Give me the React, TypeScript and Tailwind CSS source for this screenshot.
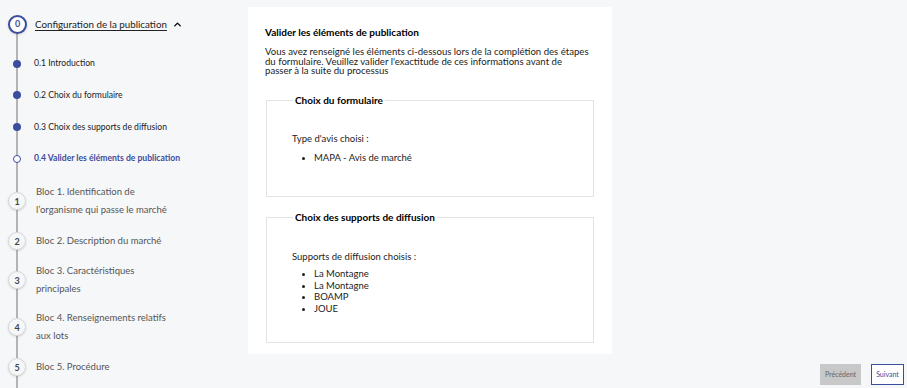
import { ChevronUp } from "lucide-react";

const subSteps = [
  { label: "0.1 Introduction", done: true },
  { label: "0.2 Choix du formulaire", done: true },
  { label: "0.3 Choix des supports de diffusion", done: true },
  { label: "0.4 Valider les éléments de publication", done: false },
];

const blocs = [
  { n: 1, lines: ["Bloc 1. Identification de", "l’organisme qui passe le marché"], h: "h-[46px]" },
  { n: 2, lines: ["Bloc 2. Description du marché"], h: "h-[34px]" },
  { n: 3, lines: ["Bloc 3. Caractéristiques", "principales"], h: "h-[44px]" },
  { n: 4, lines: ["Bloc 4. Renseignements relatifs", "aux lots"], h: "h-[50px]" },
  { n: 5, lines: ["Bloc 5. Procédure"], h: "h-[30px]" },
];

function Fieldset({
  legend,
  intro,
  items,
  listClass,
  className,
}: {
  legend: string;
  intro: string;
  items: string[];
  listClass: string;
  className: string;
}) {
  return (
    <fieldset className={`mx-[18px] border border-[#e3e3e3] px-[25px] ${className}`}>
      <legend className="ml-[1px] px-[2px] text-[10px] font-bold text-black">{legend}</legend>
      <p className="text-[9.5px] text-[#222]">{intro}</p>
      <ul className={`ml-[22px] list-disc text-[#222] marker:text-[8px] ${listClass}`}>
        {items.map((item, i) => (
          <li key={i}>{item}</li>
        ))}
      </ul>
    </fieldset>
  );
}

export default function App() {
  return (
    <div
      className="flex h-[388px] w-[907px] overflow-hidden bg-[#f6f7f9]"
      style={{ fontFamily: "Lato, 'Open Sans', sans-serif" }}
    >
      {/* stepper */}
      <div className="relative w-[248px] shrink-0 pt-[14px]">
        <div className="absolute top-[30px] bottom-0 left-[16px] w-[2px] bg-[#b4b4b4]" />
        <div className="relative flex h-[20px] items-center">
          <div className="ml-[8px] flex h-[19px] w-[19px] items-center justify-center rounded-full border-2 border-[#3b4d9e] bg-white text-[9px] font-bold text-[#3b4d9e] shadow">
            0
          </div>
          <span className="ml-[8px] text-[9.8px] text-[#222] underline underline-offset-2">
            Configuration de la publication
          </span>
          <ChevronUp className="ml-[5px] h-[11px] w-[11px] text-black" strokeWidth={3} />
        </div>
        <div className="relative mt-[14px] flex flex-col">
          {subSteps.map((s) => (
            <div key={s.label} className="flex h-[31.6px] items-center">
              <div
                className={`ml-[13px] h-[8px] w-[8px] rounded-full ${
                  s.done ? "bg-[#3b4d9e]" : "border-[1.5px] border-[#3b4d9e] bg-white"
                }`}
              />
              <span
                className={`ml-[13px] text-[8.6px] ${
                  s.done ? "text-[#222]" : "font-bold text-[#3b4d9e]"
                }`}
              >
                {s.label}
              </span>
            </div>
          ))}
        </div>
        <div className="relative mt-[4px] flex flex-col">
          {blocs.map((b) => (
            <div key={b.n} className={`flex items-center ${b.h}`}>
              <div className="ml-[8px] flex h-[18px] w-[18px] shrink-0 items-center justify-center rounded-full border border-[#d8d8d8] bg-[#f6f7f9] text-[9px] font-bold text-[#444] shadow">
                {b.n}
              </div>
              <div className="ml-[10px] text-[9.5px] leading-[18px] text-[#555]">
                {b.lines.map((l) => (
                  <div key={l}>{l}</div>
                ))}
              </div>
            </div>
          ))}
        </div>
      </div>

      {/* main panel */}
      <div className="mt-[7px] h-[347px] w-[364px] shrink-0 bg-white pt-[18px]">
        <h1 className="px-[17px] text-[10px] font-bold text-black">
          Valider les éléments de publication
        </h1>
        <p className="mt-[7px] px-[17px] text-[9.6px] leading-[9.6px] text-[#222]">
          Vous avez renseigné les éléments ci-dessous lors de la complétion des étapes du
          formulaire. Veuillez valider l'exactitude de ces informations avant de
          <br />
          passer à la suite du processus
        </p>
        <Fieldset
          legend="Choix du formulaire"
          intro="Type d'avis choisi :"
          items={["MAPA - Avis de marché"]}
          listClass="mt-[6px] text-[9.5px] leading-[12px]"
          className="mt-[17px] h-[104px] pt-[24px]"
        />
        <Fieldset
          legend="Choix des supports de diffusion"
          intro="Supports de diffusion choisis :"
          items={["La Montagne", "La Montagne", "BOAMP", "JOUE"]}
          listClass="mt-[4px] text-[9.5px] leading-[11.5px]"
          className="mt-[13px] h-[133px] pt-[25px]"
        />
      </div>

      {/* actions */}
      <div className="flex flex-1 items-end justify-end gap-[10px] pr-[3px] pb-[3px]">
        <button className="h-[21px] w-[41px] bg-[#c8c8c8] text-[7px] text-[#666]">Précédent</button>
        <button className="h-[21px] w-[33px] border border-[#3b4d9e] bg-white text-[7px] text-[#3b4d9e]">
          Suivant
        </button>
      </div>
    </div>
  );
}
